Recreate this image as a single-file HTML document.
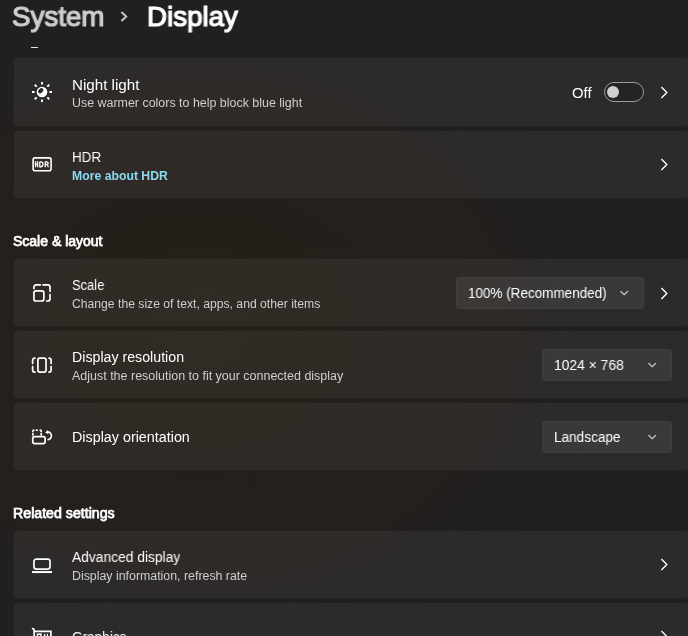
<!DOCTYPE html>
<html><head><meta charset="utf-8">
<style>
*{margin:0;padding:0;box-sizing:border-box}
html,body{width:688px;height:636px;overflow:hidden}
body{position:relative;font-family:"Liberation Sans",sans-serif;color:#fff;background:#221f1d}
.bg{position:absolute;left:0;top:0;width:688px;height:636px;background:#202021}
.bgtop{position:absolute;left:0;top:0;width:688px;height:636px;
 background:radial-gradient(ellipse 420px 330px at 200px 330px,rgba(44,31,19,.5) 0%,rgba(44,31,19,.42) 50%,rgba(44,31,19,.12) 85%,rgba(44,31,19,0) 100%)}
.abs{position:absolute;white-space:nowrap;will-change:transform}
.card{position:absolute;left:13px;width:676px;height:69px;border:1px solid rgba(0,0,0,.22);border-radius:4px;background:rgba(255,255,255,.05)}
.ttl{position:absolute;will-change:transform;left:72px;font-size:14px;line-height:14px;color:#fff;transform-origin:0 0}
.sub{position:absolute;will-change:transform;left:72px;font-size:12px;line-height:12px;color:#cfcfcf;transform-origin:0 0}
.hdr{position:absolute;will-change:transform;left:13px;font-size:14px;line-height:14px;font-weight:400;-webkit-text-stroke:.75px #fff;color:#fff;transform-origin:0 0}
.ico{position:absolute;left:28px;width:28px;height:28px;will-change:transform}
.ico *{fill:none;stroke:#fff;stroke-width:1.7;stroke-linecap:round}
.chev{position:absolute;left:656px;width:16px;height:16px;will-change:transform}
.dd{position:absolute;height:32px;border-radius:4px;background:rgba(255,255,255,.065);border:1px solid rgba(255,255,255,.03)}
.ddt{position:absolute;will-change:transform;font-size:14px;line-height:14px;color:#fff;transform-origin:0 0}
</style></head><body>
<div class="bg"></div><div class="bgtop"></div>

<!-- header -->
<div class="abs" style="left:12px;top:3px;font-size:28px;line-height:28px;font-weight:400;-webkit-text-stroke:1.2px #cdcdcd;color:#cdcdcd;transform:scaleX(.99);transform-origin:0 0">System</div>
<svg class="abs" style="left:116px;top:8px" width="16" height="16"><path d="M5.4 3.9 L10.2 8.4 L5.4 12.9" fill="none" stroke="#c4c4c4" stroke-width="2"/></svg>
<div class="abs" style="left:147px;top:3px;font-size:28px;line-height:28px;font-weight:400;-webkit-text-stroke:1.2px #fff;color:#fff;transform:scaleX(.99);transform-origin:0 0">Display</div>
<div class="abs" style="left:31px;top:47px;width:7px;height:1px;background:#e8e8e8"></div>

<!-- Night light -->
<div class="card" style="top:57px;height:70px"></div>
<svg class="ico" style="top:78px" viewBox="0 0 28 28">
 <path style="fill:#fff;stroke:none" fill-rule="evenodd" d="M14 8.65a5.35 5.35 0 1 1 0 10.7a5.35 5.35 0 1 1 0-10.7z M10.63 14.87A3.0 1.95 -45 1 0 14.87 10.63A3.0 1.95 -45 1 0 10.63 14.87z"/>
 <path style="stroke-width:1.9;stroke-linecap:square" d="M22.40 14.00L23.05 14.00M19.98 19.98L20.61 20.61M14.00 22.40L14.00 23.05M8.02 19.98L7.39 20.61M5.60 14.00L4.95 14.00M8.02 8.02L7.39 7.39M14.00 5.60L14.00 4.95M19.98 8.02L20.61 7.39"/>
</svg>
<div class="ttl" style="transform:scaleX(1.083);top:78px">Night light</div>
<div class="sub" style="transform:scaleX(1.036);top:97px">Use warmer colors to help block blue light</div>
<div class="ddt" style="transform:scaleX(1.06);left:572px;top:86px">Off</div>
<div class="abs" style="left:604px;top:82px;width:40px;height:20px;border:1px solid #9c9c9c;border-radius:10px;background:rgba(0,0,0,.14)"></div>
<div class="abs" style="left:607px;top:86px;width:12px;height:12px;border-radius:6px;background:#cfcfcf"></div>
<svg class="chev" style="top:84px" viewBox="0 0 16 16"><path d="M5.4 3.1 L10.8 8.6 L5.4 14.1" fill="none" stroke="#fff" stroke-width="1.4"/></svg>

<!-- HDR -->
<div class="card" style="top:130px"></div>
<svg class="ico" style="top:150px" viewBox="0 0 28 28">
 <rect x="5.1" y="7.9" width="18" height="12.8" rx="2" style="stroke-width:1.6"/>
 <path style="stroke-width:1.3;stroke-linecap:butt;stroke-linejoin:miter" d="M7.5 11.3V17.3M9.6 11.3V17.3M7.5 14.3H9.6M11.8 11.85V16.75H12.8Q15 16.75 15 14.3Q15 11.85 12.8 11.85H11.8M17.3 17.3V11.85H18.7Q20.2 11.85 20.2 13.15Q20.2 14.45 18.7 14.45H17.3M19 14.5L20.5 17.3"/>
</svg>
<div class="ttl" style="transform:scaleX(0.96);top:150px">HDR</div>
<div class="sub" style="transform:scaleX(1.02);top:170px;color:#8ad9f3;font-weight:700">More about HDR</div>
<svg class="chev" style="top:156px" viewBox="0 0 16 16"><path d="M5.4 3.1 L10.8 8.6 L5.4 14.1" fill="none" stroke="#fff" stroke-width="1.4"/></svg>

<!-- Scale & layout -->
<div class="hdr" style="transform:scaleX(1.0);top:234px">Scale &amp; layout</div>

<div class="card" style="top:258px"></div>
<svg class="ico" style="top:279px" viewBox="0 0 28 28">
 <path d="M5.94 9.5V8.2a2.26 2.26 0 0 1 2.26-2.26H12.3M15 5.94h4.7a2.3 2.3 0 0 1 2.3 2.3V12.3M22 15.6v4.1a2.3 2.3 0 0 1-2.3 2.3H18.6"/>
 <rect x="5.94" y="11.9" width="9.9" height="10.1" rx="2"/>
</svg>
<div class="ttl" style="transform:scaleX(0.924);top:278px">Scale</div>
<div class="sub" style="transform:scaleX(1.014);top:298px">Change the size of text, apps, and other items</div>
<div class="dd" style="left:456px;top:277px;width:188px"></div>
<div class="ddt" style="transform:scaleX(0.963);left:468px;top:286px">100% (Recommended)</div>
<svg class="abs" style="left:616px;top:285px" width="16" height="16" viewBox="0 0 16 16"><path d="M4.4 6.1 L8.2 9.7 L12 6.1" fill="none" stroke="#d0d0d0" stroke-width="1.2"/></svg>
<svg class="chev" style="top:285px" viewBox="0 0 16 16"><path d="M5.4 3.1 L10.8 8.6 L5.4 14.1" fill="none" stroke="#fff" stroke-width="1.4"/></svg>

<div class="card" style="top:330px"></div>
<svg class="ico" style="top:351px" viewBox="0 0 28 28">
 <rect x="9.9" y="7.05" width="8.15" height="14.05" rx="2"/>
 <path d="M7 7.05h-.2a2.2 2.2 0 0 0-2.2 2.2V12.4M4.6 15.6v3.3a2.2 2.2 0 0 0 2.2 2.2H7M21 7.05h0a2.1 2.1 0 0 1 2.1 2.1V12.4M23.1 15.6v3.4a2.1 2.1 0 0 1-2.1 2.1h0"/>
</svg>
<div class="ttl" style="transform:scaleX(1.014);top:350px">Display resolution</div>
<div class="sub" style="transform:scaleX(1.04);top:370px">Adjust the resolution to fit your connected display</div>
<div class="dd" style="left:542px;top:349px;width:130px"></div>
<div class="ddt" style="transform:scaleX(0.99);left:554px;top:358px">1024 × 768</div>
<svg class="abs" style="left:644px;top:357px" width="16" height="16" viewBox="0 0 16 16"><path d="M4.4 6.1 L8.2 9.7 L12 6.1" fill="none" stroke="#d0d0d0" stroke-width="1.2"/></svg>

<div class="card" style="top:402px"></div>
<svg class="ico" style="top:423px" viewBox="0 0 28 28">
 <rect x="4.75" y="13.55" width="12.4" height="7" rx="2"/>
 <path d="M4.85 8.4V8.1Q4.85 7.2 5.75 7.2M8.45 7.2h.7M12.3 7.2Q13.2 7.2 13.2 8.1V8.4M4.85 10.6V11.9M13.2 10.6V11.9"/>
 <path d="M19.5 8.9A3.9 3.9 0 0 1 19.5 16.7" style="stroke-linecap:butt"/>
 <path style="fill:#fff;stroke:none" d="M17.2 9.4L19.8 6.9L20.4 11.2Z"/>
</svg>
<div class="ttl" style="transform:scaleX(1.023);top:430px">Display orientation</div>
<div class="dd" style="left:542px;top:421px;width:130px"></div>
<div class="ddt" style="transform:scaleX(0.97);left:554px;top:430px">Landscape</div>
<svg class="abs" style="left:644px;top:429px" width="16" height="16" viewBox="0 0 16 16"><path d="M4.4 6.1 L8.2 9.7 L12 6.1" fill="none" stroke="#d0d0d0" stroke-width="1.2"/></svg>

<!-- Related -->
<div class="hdr" style="transform:scaleX(1.013);top:506px">Related settings</div>

<div class="card" style="top:530px"></div>
<svg class="ico" style="top:551px" viewBox="0 0 28 28">
 <rect x="5.94" y="8.15" width="16.06" height="9.9" rx="2.3"/>
 <path d="M4 21.05H24" style="stroke-width:2;stroke-linecap:butt"/>
</svg>
<div class="ttl" style="transform:scaleX(0.986);top:550px">Advanced display</div>
<div class="sub" style="transform:scaleX(1.03);top:570px">Display information, refresh rate</div>
<svg class="chev" style="top:556px" viewBox="0 0 16 16"><path d="M5.4 3.1 L10.8 8.6 L5.4 14.1" fill="none" stroke="#fff" stroke-width="1.4"/></svg>

<div class="card" style="top:602px"></div>
<svg class="ico" style="top:623px" viewBox="0 0 28 28">
 <path d="M4.6 5.6Q6.1 5.6 6.1 7.4V22M6.1 8.3H22.9V20H6.1"/>
 <rect x="9.4" y="11.2" width="3.6" height="3.2" style="stroke-width:1.5"/>
 <path d="M16.6 11.4v1.2M19.4 11.4v1.2" style="stroke-width:1.4"/>
</svg>
<div class="ttl" style="transform:scaleX(0.97);top:630px">Graphics</div>
<svg class="chev" style="top:628px" viewBox="0 0 16 16"><path d="M5.4 3.1 L10.8 8.6 L5.4 14.1" fill="none" stroke="#fff" stroke-width="1.4"/></svg>

</body></html>
